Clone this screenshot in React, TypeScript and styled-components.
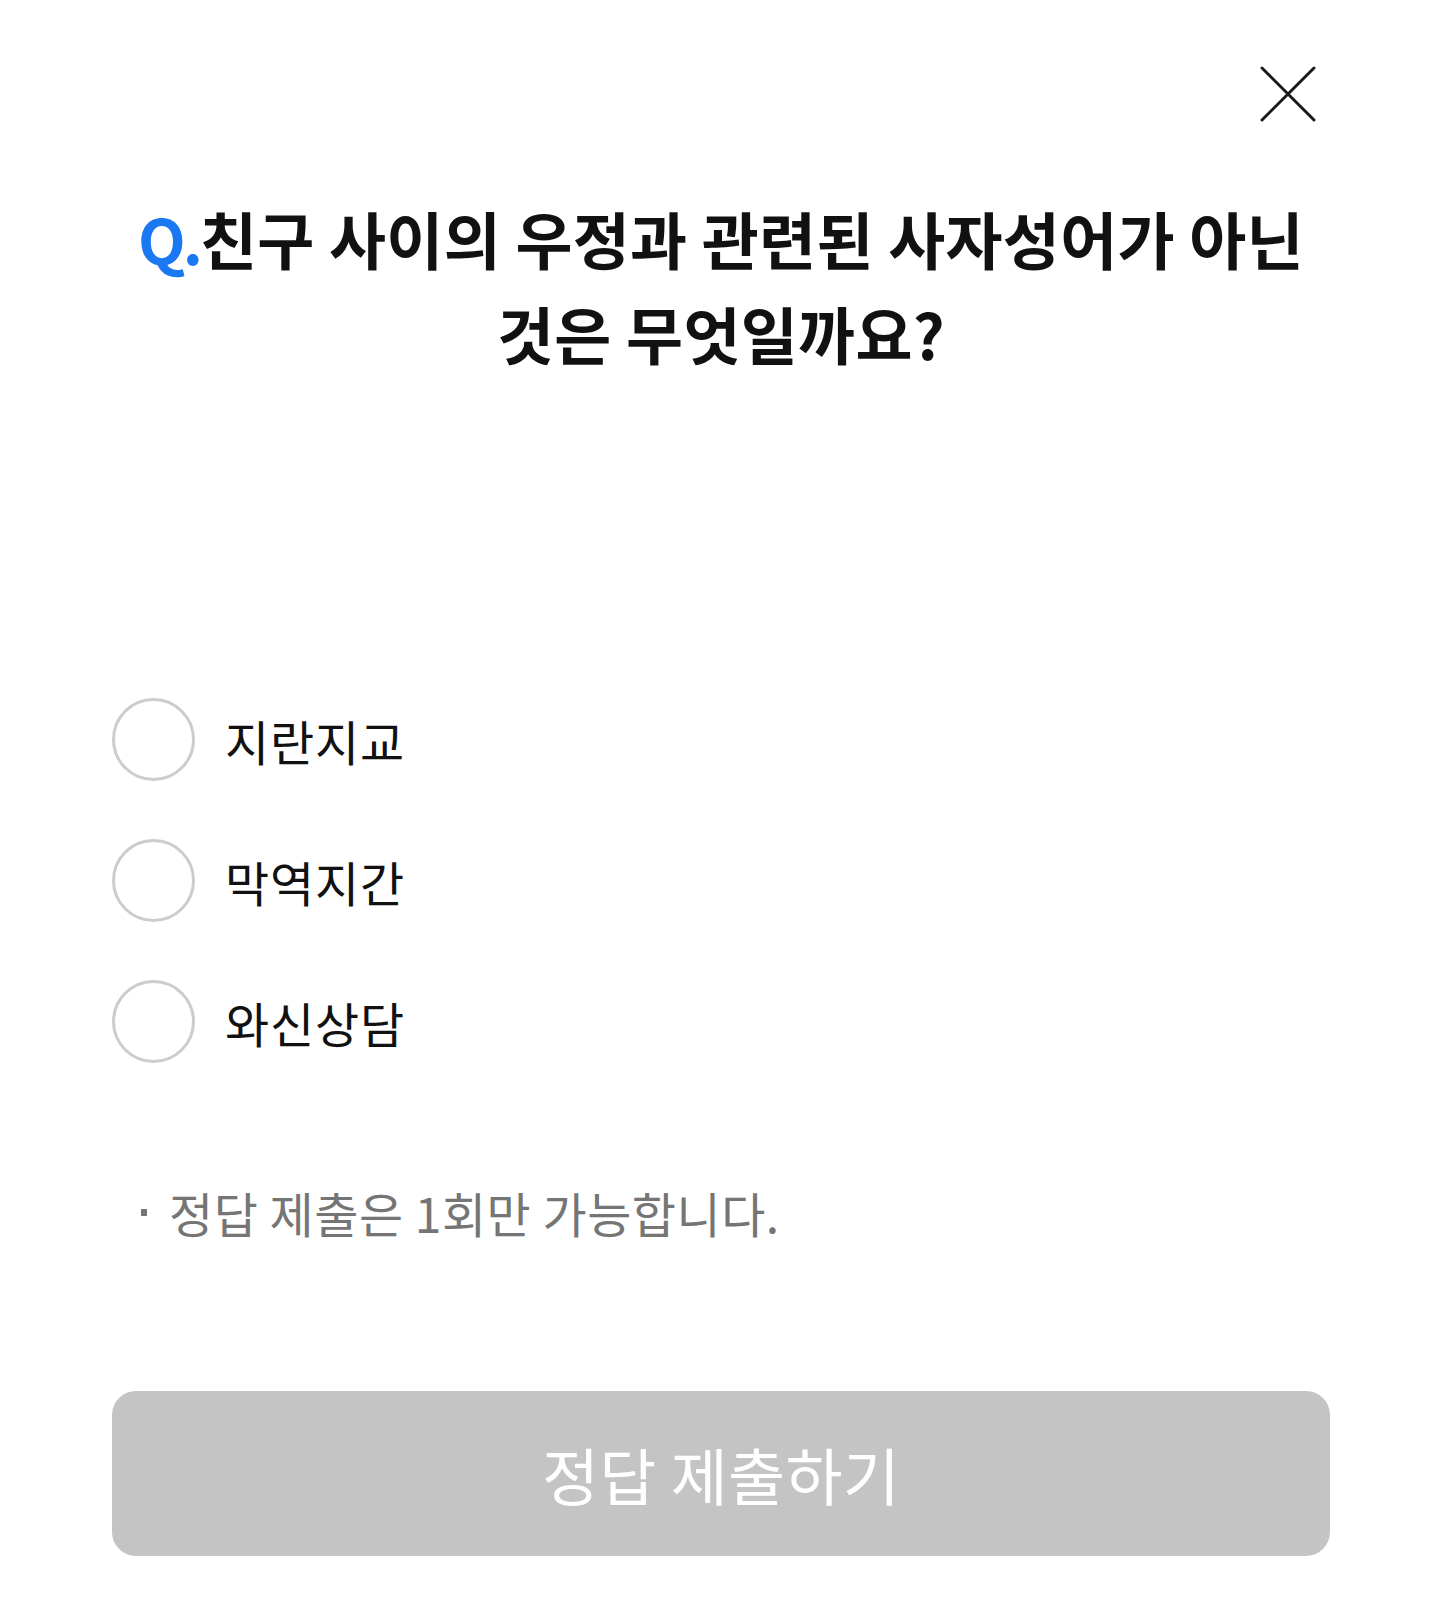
import { useState } from 'react';
import styled, { createGlobalStyle } from 'styled-components';

const GlobalStyle = createGlobalStyle`
  * {
    box-sizing: border-box;
  }

  body {
    margin: 0;
    background: #ffffff;
    font-family: 'Noto Sans CJK KR', 'Noto Sans', sans-serif;
    color: #111111;
  }
`;

const Page = styled.div`
  display: flex;
  flex-direction: column;
  width: 1440px;
  min-height: 1610px;
  padding: 0 110px 54px 112px;
`;

const Header = styled.div`
  display: flex;
  justify-content: flex-end;
  padding: 66px 14px 0 0;
`;

const CloseButton = styled.button`
  display: flex;
  align-items: center;
  justify-content: center;
  width: 56px;
  height: 56px;
  padding: 0;
  background: none;
  border: none;
  cursor: pointer;
`;

const Question = styled.h2`
  margin: 69px 0 0;
  font-size: 62px;
  font-weight: 700;
  line-height: 95px;
  letter-spacing: 0.3px;
  text-align: center;
  color: #111111;
`;

const QMark = styled.span`
  letter-spacing: -3px;
  color: #1a78f2;
`;

const OptionList = styled.ul`
  display: flex;
  flex-direction: column;
  gap: 58px;
  margin: 317px 0 0;
  padding: 0;
  list-style: none;
`;

const OptionRow = styled.li`
  display: flex;
  align-items: center;
  gap: 30px;
  cursor: pointer;
`;

const Radio = styled.span<{ $checked: boolean }>`
  flex-shrink: 0;
  width: 83px;
  height: 83px;
  border: 3px solid ${({ $checked }) => ($checked ? '#1a78f2' : '#cccccc')};
  border-radius: 50%;
  background: ${({ $checked }) => ($checked ? '#1a78f2' : '#ffffff')};
  box-shadow: ${({ $checked }) => ($checked ? 'inset 0 0 0 14px #ffffff' : 'none')};
`;

const OptionLabel = styled.span`
  font-size: 48px;
  font-weight: 400;
  line-height: 60px;
  letter-spacing: 0.8px;
  color: #111111;
`;

const Notice = styled.p`
  display: flex;
  align-items: center;
  gap: 22px;
  margin: 119px 0 0;
  padding-left: 29px;
  font-size: 48px;
  line-height: 60px;
  letter-spacing: 0.5px;
  color: #757575;
`;

const Bullet = styled.span`
  width: 6px;
  height: 7px;
  background: #757575;
`;

const SubmitButton = styled.button<{ $active: boolean }>`
  width: 100%;
  height: 165px;
  margin-top: 149px;
  border: none;
  border-radius: 24px;
  background: ${({ $active }) => ($active ? '#1a78f2' : '#c4c4c4')};
  font-family: inherit;
  font-size: 62px;
  font-weight: 400;
  letter-spacing: 0.3px;
  color: #ffffff;
  cursor: ${({ $active }) => ($active ? 'pointer' : 'default')};
`;

const options = ['지란지교', '막역지간', '와신상담'];

function App() {
  const [selected, setSelected] = useState<number | null>(null);

  return (
    <>
      <GlobalStyle />
      <Page>
        <Header>
          <CloseButton aria-label="닫기">
            <svg width="56" height="56" viewBox="0 0 56 56" fill="none">
              <path
                d="M2 2L54 54M54 2L2 54"
                stroke="#1a1a1a"
                strokeWidth="3"
                strokeLinecap="round"
              />
            </svg>
          </CloseButton>
        </Header>

        <Question>
          <QMark>Q.</QMark>친구 사이의 우정과 관련된 사자성어가 아닌 것은 무엇일까요?
        </Question>

        <OptionList>
          {options.map((option, index) => (
            <OptionRow key={option} onClick={() => setSelected(index)}>
              <Radio $checked={selected === index} />
              <OptionLabel>{option}</OptionLabel>
            </OptionRow>
          ))}
        </OptionList>

        <Notice>
          <Bullet />
          정답 제출은 1회만 가능합니다.
        </Notice>

        <SubmitButton $active={selected !== null} disabled={selected === null}>
          정답 제출하기
        </SubmitButton>
      </Page>
    </>
  );
}

export default App;
